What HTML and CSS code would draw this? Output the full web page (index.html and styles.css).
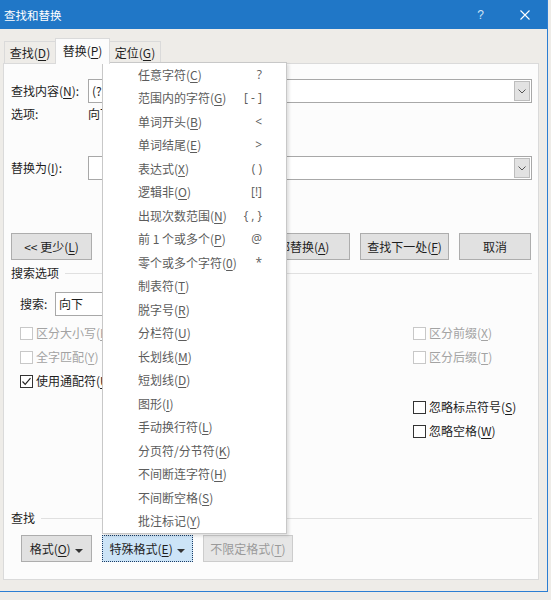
FILE: index.html
```html
<!DOCTYPE html>
<html>
<head>
    <title>查找和替换</title>
    <link rel="stylesheet" href="styles.css">
</head>
<body>
    <div class="window">
        <div class="title-bar">
            <span class="title">查找和替换</span>
            <span class="title-help">?</span>
            <span class="title-close">
                <svg width="10" height="10" viewBox="0 0 10 10"><path d="M0.5 0.5 L9.5 9.5 M9.5 0.5 L0.5 9.5" stroke="#fff" stroke-width="1.1"/></svg>
            </span>
        </div>

        <div class="tabs">
            <div class="tab">查找(<u>D</u>)</div>
            <div class="tab tab-active">替换(<u>P</u>)</div>
            <div class="tab">定位(<u>G</u>)</div>
        </div>

        <div class="panel">
            <div class="field-row">
                <span class="field-label">查找内容(<u>N</u>):</span>
                <div class="combo">
                    <span class="combo-text">(?)</span>
                    <span class="combo-btn"><svg width="8" height="5" viewBox="0 0 8 5"><path d="M0.5 0.5 L4 4 L7.5 0.5" fill="none" stroke="#555" stroke-width="1"/></svg></span>
                </div>
            </div>
            <div class="field-row info-row">
                <span class="field-label">选项:</span>
                <span>向下, 使用通配符</span>
            </div>
            <div class="field-row replace-row">
                <span class="field-label">替换为(<u>I</u>):</span>
                <div class="combo">
                    <span class="combo-text"></span>
                    <span class="combo-btn"><svg width="8" height="5" viewBox="0 0 8 5"><path d="M0.5 0.5 L4 4 L7.5 0.5" fill="none" stroke="#555" stroke-width="1"/></svg></span>
                </div>
            </div>

            <div class="button-row">
                <button class="btn btn-less">&lt;&lt; 更少(<u>L</u>)</button>
                <button class="btn btn-wide btn-all">全部替换(<u>A</u>)</button>
                <button class="btn btn-wide">查找下一处(<u>F</u>)</button>
                <button class="btn btn-cancel">取消</button>
            </div>

            <div class="section-label">搜索选项</div>

            <div class="options">
                <div class="options-left">
                    <div class="search-row">
                        <span class="search-label">搜索:</span>
                        <div class="search-combo">向下</div>
                    </div>
                    <div class="check-row check-first disabled"><span class="check"></span>区分大小写(<u>H</u>)</div>
                    <div class="check-row disabled"><span class="check"></span>全字匹配(<u>Y</u>)</div>
                    <div class="check-row">
                        <span class="check"><svg width="11" height="11" viewBox="0 0 11 11"><path d="M1.5 5.5 L4.2 8.3 L9.5 2.2" fill="none" stroke="#222" stroke-width="1.2"/></svg></span>使用通配符(<u>U</u>)
                    </div>
                </div>
                <div class="options-right">
                    <div class="check-row disabled"><span class="check"></span>区分前缀(<u>X</u>)</div>
                    <div class="check-row disabled"><span class="check"></span>区分后缀(<u>T</u>)</div>
                    <div class="check-row check-gap"><span class="check"></span>忽略标点符号(<u>S</u>)</div>
                    <div class="check-row"><span class="check"></span>忽略空格(<u>W</u>)</div>
                </div>
            </div>

            <div class="section-label find-label">查找</div>

            <div class="bottom-row">
                <button class="btn btn-format">格式(<u>O</u>) <span class="caret"></span></button>
                <button class="btn btn-special">特殊格式(<u>E</u>) <span class="caret"></span></button>
                <button class="btn btn-clear" disabled>不限定格式(<u>T</u>)</button>
            </div>
        </div>

        <div class="menu">
            <div class="menu-item"><span>任意字符(<u>C</u>)</span><span class="key">?</span></div>
            <div class="menu-item"><span>范围内的字符(<u>G</u>)</span><span class="key">[ - ]</span></div>
            <div class="menu-item"><span>单词开头(<u>B</u>)</span><span class="key">&lt;</span></div>
            <div class="menu-item"><span>单词结尾(<u>E</u>)</span><span class="key">&gt;</span></div>
            <div class="menu-item"><span>表达式(<u>X</u>)</span><span class="key">( )</span></div>
            <div class="menu-item"><span>逻辑非(<u>O</u>)</span><span class="key">[!]</span></div>
            <div class="menu-item"><span>出现次数范围(<u>N</u>)</span><span class="key">{ , }</span></div>
            <div class="menu-item"><span>前 1 个或多个(<u>P</u>)</span><span class="key">@</span></div>
            <div class="menu-item"><span>零个或多个字符(<u>0</u>)</span><span class="key">*</span></div>
            <div class="menu-item"><span>制表符(<u>T</u>)</span></div>
            <div class="menu-item"><span>脱字号(<u>R</u>)</span></div>
            <div class="menu-item"><span>分栏符(<u>U</u>)</span></div>
            <div class="menu-item"><span>长划线(<u>M</u>)</span></div>
            <div class="menu-item"><span>短划线(<u>D</u>)</span></div>
            <div class="menu-item"><span>图形(<u>I</u>)</span></div>
            <div class="menu-item"><span>手动换行符(<u>L</u>)</span></div>
            <div class="menu-item"><span>分页符/分节符(<u>K</u>)</span></div>
            <div class="menu-item"><span>不间断连字符(<u>H</u>)</span></div>
            <div class="menu-item"><span>不间断空格(<u>S</u>)</span></div>
            <div class="menu-item"><span>批注标记(<u>Y</u>)</span></div>
        </div>
    </div>
</body>
</html>
```

FILE: styles.css
```css
body {
    margin: 0;
    background-color: #eeece8;
    font-family: "Noto Sans CJK SC", "Microsoft YaHei", sans-serif;
    font-size: 12px;
    line-height: 16px;
    color: #1e1e1e;
}

* {
    box-sizing: border-box;
}

u {
    text-underline-offset: 2px;
}

.window {
    position: relative;
    width: 548px;
    height: 592px;
    border-right: 1px solid #2c7ed3;
    border-bottom: 1px solid #2c7ed3;
    background-color: #eeece8;
}

.title-bar {
    display: flex;
    align-items: center;
    height: 29px;
    padding-left: 4px;
    background-color: #2077c7;
    color: #ffffff;
}
.title {
    flex: 1;
    font-size: 11.5px;
}
.title-help {
    width: 45px;
    text-align: center;
    font-family: "Liberation Sans", sans-serif;
    font-size: 12px;
    color: #cfe3f5;
}
.title-close {
    width: 44px;
    display: flex;
    justify-content: center;
}

/* tabs */
.tabs {
    display: flex;
    align-items: flex-end;
    height: 25px;
    margin-top: 9px;
    padding-left: 4px;
}
.tab {
    width: 52px;
    height: 22px;
    line-height: 22px;
    text-align: center;
    border: 1px solid #dadada;
    border-bottom: none;
    margin-right: -1px;
}
.tab-active {
    position: relative;
    z-index: 1;
    width: 55px;
    height: 26px;
    line-height: 24px;
    margin-bottom: -1px;
    background-color: #fcfcfc;
}

.panel {
    width: 536px;
    height: 517px;
    margin-left: 3px;
    border: 1px solid #dadada;
    background-color: #fcfcfc;
}

/* find / replace fields */
.field-row {
    display: flex;
    align-items: center;
    height: 24px;
    margin-top: 15px;
    padding: 0 6px 0 7px;
}
.field-label {
    width: 77px;
}
.info-row {
    height: 22px;
    margin-top: 0;
}
.replace-row {
    margin-top: 31px;
}
.combo {
    flex: 1;
    display: flex;
    height: 24px;
    border: 1px solid #a8a8a8;
    background-color: #ffffff;
}
.combo-text {
    flex: 1;
    padding: 3px 0 0 3px;
}
.combo-btn {
    display: flex;
    align-items: center;
    justify-content: center;
    width: 16px;
    margin: 1px;
    background-color: #e2e2e2;
    border: 1px solid #bdbdbd;
}

/* buttons */
.btn {
    height: 27px;
    padding: 0;
    border: 1px solid #adadad;
    background-color: #e1e1e1;
    font-family: inherit;
    font-size: 12px;
    color: #1e1e1e;
}
.button-row {
    display: flex;
    gap: 10px;
    margin-top: 53px;
    padding: 0 7px;
}
.btn-less {
    width: 81px;
}
.btn-wide {
    width: 89px;
}
.btn-all {
    margin-left: auto;
    text-align: left;
    padding-left: 4px;
}
.btn-cancel {
    width: 72px;
}

.section-label {
    display: flex;
    align-items: center;
    height: 16px;
    margin-top: 5px;
    padding: 0 6px 0 7px;
}
.section-label::after {
    content: "";
    flex: 1;
    margin-left: 6px;
    border-top: 1px solid #e0e0e0;
}
.find-label {
    margin-top: 67px;
}

/* search options */
.options {
    display: flex;
    margin-top: 11px;
}
.options-left {
    width: 409px;
    padding-left: 16px;
}
.options-right {
    padding-top: 29px;
}
.search-row {
    display: flex;
    align-items: center;
    height: 24px;
}
.search-label {
    width: 35px;
}
.search-combo {
    width: 130px;
    height: 24px;
    padding: 3px 0 0 3px;
    border: 1px solid #a8a8a8;
    background-color: #ffffff;
}
.check-row {
    display: flex;
    align-items: center;
    height: 24px;
}
.check-first {
    margin-top: 5px;
}
.check-gap {
    margin-top: 26px;
}
.check {
    display: flex;
    align-items: center;
    justify-content: center;
    width: 13px;
    height: 13px;
    margin-right: 3px;
    border: 1px solid #333333;
    background-color: #ffffff;
}
.disabled {
    color: #a3a3a3;
}
.disabled .check {
    border-color: #c8c8c8;
}

/* bottom buttons */
.bottom-row {
    display: flex;
    gap: 10px;
    margin-top: 9px;
    padding-left: 17px;
}
.btn-format {
    width: 71px;
}
.btn-special {
    width: 91px;
    background-color: #cce4f7;
    border: 1px dotted #1c3d66;
}
.btn-clear {
    width: 90px;
    color: #9a9a9a;
    border-color: #cccccc;
    background-color: #e6e6e6;
}
.caret {
    display: inline-block;
    margin-left: 2px;
    vertical-align: middle;
    border-left: 4px solid transparent;
    border-right: 4px solid transparent;
    border-top: 4px solid #333333;
}

/* special format dropdown */
.menu {
    position: absolute;
    left: 102px;
    top: 62px;
    width: 185px;
    border: 1px solid #c8c8c8;
    background-color: #ffffff;
    box-shadow: 2px 2px 3px rgba(0, 0, 0, 0.12);
}
.menu-item {
    display: flex;
    align-items: center;
    justify-content: space-between;
    height: 23.5px;
    padding: 0 24px 0 35px;
    color: #5c5c5c;
}
.key {
    font-family: "Open Sans", sans-serif;
    font-size: 12px;
}
```
